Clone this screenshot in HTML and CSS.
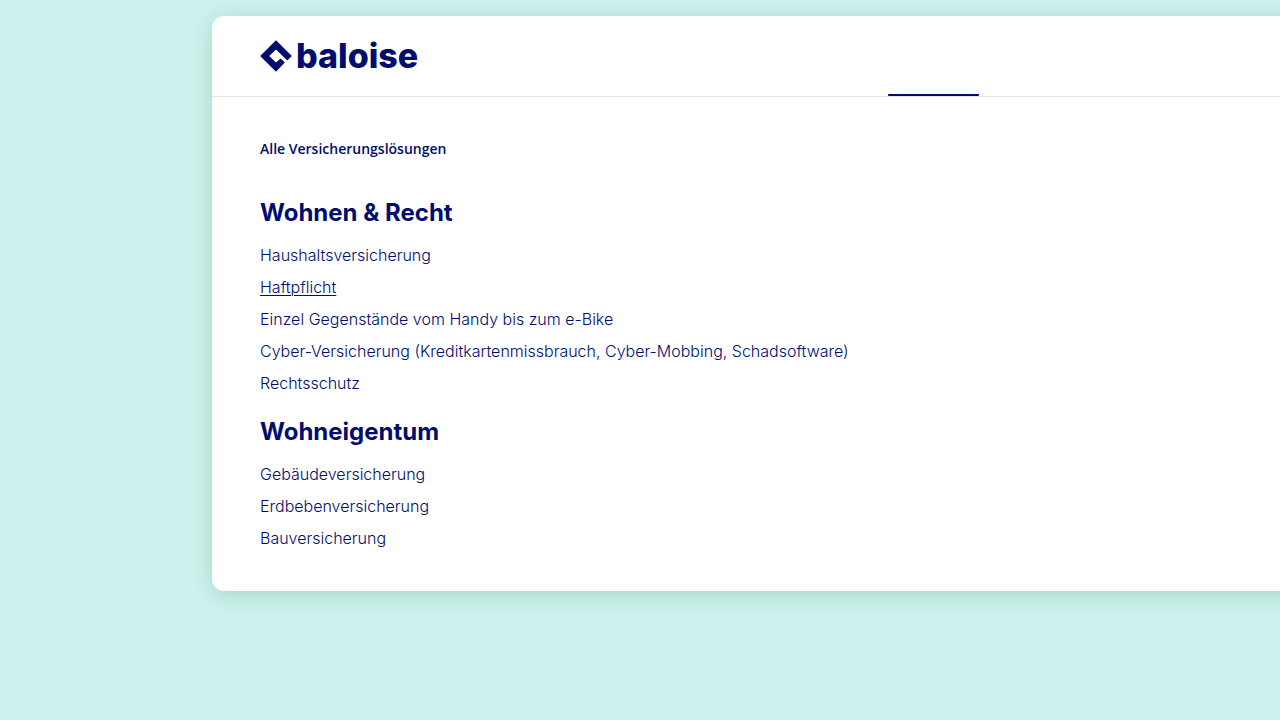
FILE: index.html
```
<!DOCTYPE html>
<html lang="de">
<head>
<meta charset="utf-8">
<title>Baloise</title>
<link rel="stylesheet" href="styles.css">
</head>
<body>
<div class="card">
  <header class="header">
    <a class="logo" href="#">
      <svg class="logo-mark" viewBox="0 0 32 32" aria-hidden="true"><path d="M16 0.2 31.9 16 27.3 20.6 16 9.4 9.2 16 16 22.6 20.6 18.4 24.8 22.6 16 31.8 0.1 16Z"/></svg>
      <span class="logo-name">baloise</span>
    </a>
    <nav class="tabs" aria-label="Hauptnavigation">
      <button class="tab" type="button" aria-label="Versichern"></button>
    </nav>
  </header>
  <main class="content">
    <a class="all-link" href="#">Alle Versicherungslösungen</a>
    <section class="group">
      <h2 class="group-title">Wohnen &amp; Recht</h2>
      <ul class="links">
        <li><a class="link" href="#">Haushaltsversicherung</a></li>
        <li><a class="link link-active" href="#">Haftpflicht</a></li>
        <li><a class="link" href="#">Einzel Gegenstände vom Handy bis zum e-Bike</a></li>
        <li><a class="link" href="#">Cyber-Versicherung (Kreditkartenmissbrauch, Cyber-Mobbing, Schadsoftware)</a></li>
        <li><a class="link" href="#">Rechtsschutz</a></li>
      </ul>
    </section>
    <section class="group">
      <h2 class="group-title">Wohneigentum</h2>
      <ul class="links">
        <li><a class="link" href="#">Gebäudeversicherung</a></li>
        <li><a class="link" href="#">Erdbebenversicherung</a></li>
        <li><a class="link" href="#">Bauversicherung</a></li>
      </ul>
    </section>
  </main>
</div>
</body>
</html>
```
FILE: styles.css
```
* { box-sizing: border-box; }
html { background: #cbf2ec; }
body {
  margin: 0;
  padding: 16px 0 48px 212px;
  overflow-x: hidden;
  font-family: Inter, "Liberation Sans", sans-serif;
  color: #000d6e;
}
a { color: inherit; text-decoration: none; }
.card {
  margin-right: -32px;
  background: #fff;
  border-radius: 12px;
  box-shadow: 0 4px 20px rgba(0, 80, 50, 0.17);
}
.header {
  display: flex;
  align-items: stretch;
  height: 81px;
  padding: 0 48px;
  border-bottom: 1px solid #e5e5e5;
}
.logo {
  display: flex;
  flex: 0 0 628px;
  align-items: center;
  gap: 4px;
}
.logo-mark { width: 32px; height: 32px; fill: #000d6e; }
.logo-name {
  font: 800 34px/32px Inter, "Liberation Sans", sans-serif;
}
.tabs { display: flex; }
.tab {
  width: 91px;
  padding: 0;
  border: 0;
  border-bottom: 2px solid #000d6e;
  border-radius: 1px;
  background: none;
}
.content { padding: 40px 48px 37px; }
.all-link {
  display: block;
  font: 600 14px/24px "Open Sans", sans-serif;
}
.group-title {
  margin: 0;
  font-size: 24px;
  font-weight: 700;
  line-height: 32px;
}
.group { padding-top: 17px; }
.all-link + .group { padding-top: 36px; }
.links {
  margin: 0;
  padding: 10px 0 0;
  list-style: none;
}
.links li { height: 32px; }
.link { font-size: 16px; font-weight: 300; line-height: 32px; }
.link-active {
  text-decoration: underline;
  text-decoration-thickness: 1px;
  text-underline-offset: 2px;
}
```
